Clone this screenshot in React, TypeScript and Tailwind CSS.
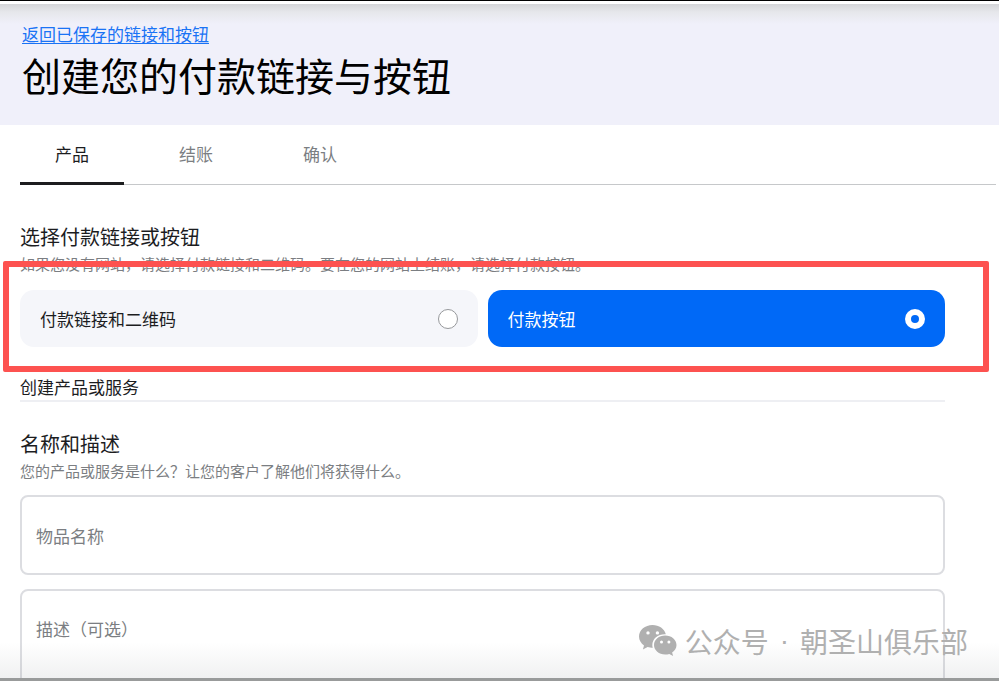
import React, { useState } from 'react';

const TABS = ['产品', '结账', '确认'];

const OPTIONS = [
    { id: 'link', label: '付款链接和二维码' },
    { id: 'button', label: '付款按钮' },
];

const WeChatIcon: React.FC = () => (
    <svg viewBox="0 0 38 32" className="w-[38px] h-8" aria-hidden="true">
        <path
            fill="currentColor"
            fillRule="evenodd"
            d="M13.5 0C6 0 0 5.100 0 11.600c0 3.700 2 6.900 5 9L3.900 24.500l4.700-2.400c1.700.5 3.200.7 5.200.7-.3-1-.5-1.900-.5-2.900 0-6 5.500-10.600 12.500-10.600h1C25.600 3.900 20 0 13.500 0ZM9 6.200a1.700 1.700 0 1 1 0 3.400 1.700 1.700 0 0 1 0-3.400Zm9.400 0a1.700 1.700 0 1 1 0 3.400 1.700 1.700 0 0 1 0-3.400Z"
        />
        <path
            fill="currentColor"
            fillRule="evenodd"
            d="M37.500 20c0-5.300-5-9.500-11.300-9.500S15 14.700 15 20s5 9.500 11.200 9.500c1.400 0 2.800-.2 4.100-.6l3.800 2.100-1-3.500c2.700-1.700 4.400-4.500 4.400-7.500Zm-15-4.600a1.500 1.500 0 1 1 0 3 1.500 1.500 0 0 1 0-3Zm7.400 0a1.500 1.500 0 1 1 0 3 1.500 1.500 0 0 1 0-3Z"
        />
    </svg>
);

const App: React.FC = () => {
    const [tab, setTab] = useState('产品');
    const [selected, setSelected] = useState('button');

    return (
        <div className="relative flex flex-col h-screen overflow-hidden bg-white border-t border-black text-[#1c1d1f] font-['Noto_Sans_CJK_SC',sans-serif]">
            <header className="mt-[3px] pl-[22px] pt-[18px] pb-[23px] shrink-0 bg-[linear-gradient(#d4d5d8_0px,#e6e7eb_8px,#f0f0fa_20px)]">
                <a href="#" className="block w-fit text-[17px] leading-6 text-[#1a73f5] underline underline-offset-2">
                    返回已保存的链接和按钮
                </a>
                <h1 className="text-[39px] leading-[56px] text-black">创建您的付款链接与按钮</h1>
            </header>

            <nav className="flex ml-5 mr-[3px] h-[60px] shrink-0 border-b border-[#c6c8ca]">
                {TABS.map(name => (
                    <button
                        key={name}
                        onClick={() => setTab(name)}
                        className={`w-[104px] mr-5 -mb-px pt-px text-[17px] leading-6 border-b-[3px] ${
                            tab === name ? 'border-[#1c1d1f] text-[#1c1d1f]' : 'border-transparent text-[#7b7e82]'
                        }`}
                    >
                        {name}
                    </button>
                ))}
            </nav>

            <main className="pl-5 pr-[54px] pt-[38px] flex-1 min-h-0 overflow-hidden">
                <h2 className="mb-px text-xl leading-7">选择付款链接或按钮</h2>
                <p className="text-[15px] leading-6 text-[#7b7e82]">
                    如果您没有网站，请选择付款链接和二维码。要在您的网站上结账，请选择付款按钮。
                </p>
                <div className="relative mt-[14px] grid grid-cols-2 gap-[10px]">
                    {OPTIONS.map(option => {
                        const active = selected === option.id;

                        return (
                            <label
                                key={option.id}
                                className={`flex items-center justify-between h-[57px] px-5 rounded-[14px] text-[17px] leading-6 cursor-pointer ${
                                    active ? 'bg-[#0069f7] text-white' : 'bg-[#f5f6fa]'
                                }`}
                            >
                                {option.label}
                                <input
                                    type="radio"
                                    name="kind"
                                    checked={active}
                                    onChange={() => setSelected(option.id)}
                                    className="appearance-none size-5 rounded-full border border-[#96989b] bg-white checked:border-[6px] checked:border-white checked:bg-[#0069f7]"
                                />
                            </label>
                        );
                    })}
                    {/* highlight frame around both options */}
                    <div className="absolute -top-[29px] -bottom-[25px] -left-[17px] -right-11 rounded-xs border-[6px] border-[#fd5250] pointer-events-none" />
                </div>

                <h3 className="mt-7 pb-px text-[17px] leading-6 border-b-2 border-[#eeeff3]">创建产品或服务</h3>

                <h2 className="mt-7 mb-px text-xl leading-7">名称和描述</h2>
                <p className="text-[15px] leading-6 text-[#7b7e82]">
                    您的产品或服务是什么？让您的客户了解他们将获得什么。
                </p>
                <input
                    type="text"
                    aria-label="物品名称"
                    placeholder="物品名称"
                    className="block w-full mt-3 h-20 px-[14px] text-[17px] leading-6 border-2 border-[#dcdde1] rounded-lg placeholder:text-[#7b7e82]"
                />
                <textarea
                    aria-label="描述（可选）"
                    placeholder="描述（可选）"
                    className="block w-full mt-[14px] h-40 px-[14px] py-[26px] text-[17px] leading-6 border-2 border-[#dcdde1] rounded-lg resize-none placeholder:text-[#7b7e82]"
                />
            </main>

            <div className="absolute inset-x-0 bottom-[3px] h-9 bg-linear-to-b from-transparent to-[#8a8f9420] pointer-events-none" />
            <div className="absolute bottom-5 right-[31px] flex items-center gap-2 text-[#b0b0b0] text-[28px] leading-10 pointer-events-none">
                <WeChatIcon />
                <span className="flex gap-[11px]">
                    <span>公众号</span>
                    <span className="font-['Liberation_Sans',sans-serif]">·</span>
                    <span>朝圣山俱乐部</span>
                </span>
            </div>
            <div className="h-[3px] shrink-0 bg-[#999b9b]" />
        </div>
    );
};

export default App;
